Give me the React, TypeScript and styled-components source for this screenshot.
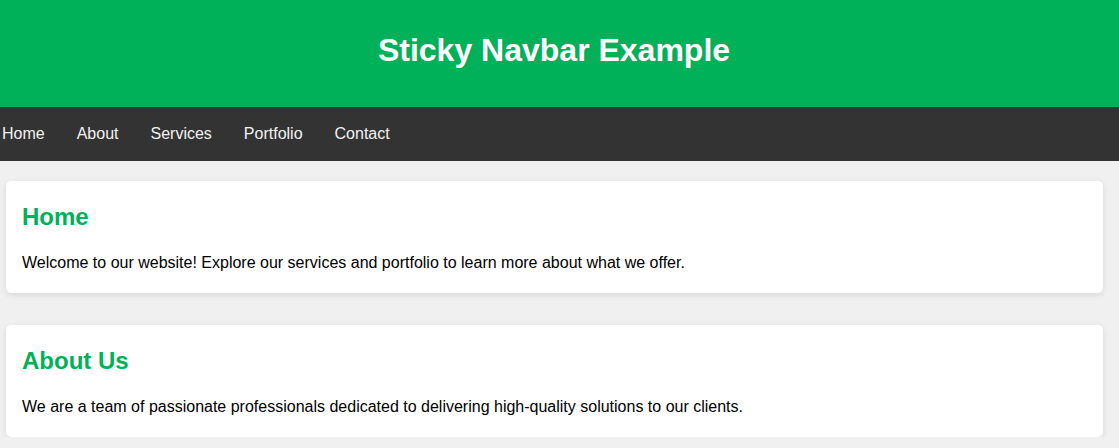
import React from "react";
import styled, { createGlobalStyle } from "styled-components";

const GlobalStyle = createGlobalStyle`
  html, body {
    margin: 0;
    padding: 0;
    background: #f0f0f0;
    font-family: "Liberation Sans", Arial, sans-serif;
  }
`;

const Header = styled.header`
  background: #00b159;
  height: 107px;
  box-sizing: border-box;
  padding: 32px 11px 0 0;
`;

const Title = styled.h1`
  margin: 0;
  color: #ffffff;
  font-size: 32px;
  font-weight: bold;
  text-align: center;
`;

const Nav = styled.nav`
  background: #333333;
  height: 54px;
  display: flex;
  align-items: center;
  gap: 32px;
  padding-left: 2px;
`;

const NavLink = styled.a`
  color: #f2f2f2;
  font-size: 16px;
  text-decoration: none;
  line-height: 54px;
`;

const Main = styled.main`
  display: flex;
  flex-direction: column;
  gap: 32px;
  padding: 20px 16px 0 6px;
`;

const Card = styled.section`
  background: #ffffff;
  border-radius: 5px;
  box-shadow: 0 2px 6px rgba(0, 0, 0, 0.1);
  padding: 22px 16px 21px;
`;

const CardTitle = styled.h2`
  margin: 0 0 23px;
  color: #00b159;
  font-size: 24px;
  font-weight: bold;
`;

const CardText = styled.p`
  margin: 0;
  color: #000000;
  font-size: 16px;
`;

const links = ["Home", "About", "Services", "Portfolio", "Contact"];

const sections = [
  {
    title: "Home",
    text: "Welcome to our website! Explore our services and portfolio to learn more about what we offer.",
  },
  {
    title: "About Us",
    text: "We are a team of passionate professionals dedicated to delivering high-quality solutions to our clients.",
  },
];

export default function App() {
  return (
    <>
      <GlobalStyle />
      <Header>
        <Title>Sticky Navbar Example</Title>
      </Header>
      <Nav>
        {links.map((l) => (
          <NavLink key={l} href={`#${l.toLowerCase()}`}>
            {l}
          </NavLink>
        ))}
      </Nav>
      <Main>
        {sections.map((s) => (
          <Card key={s.title}>
            <CardTitle>{s.title}</CardTitle>
            <CardText>{s.text}</CardText>
          </Card>
        ))}
      </Main>
    </>
  );
}
